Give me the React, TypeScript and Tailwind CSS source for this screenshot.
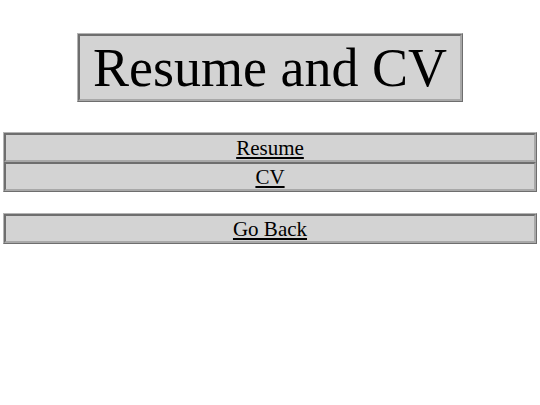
export default function App() {
  return (
    <div className="min-h-screen bg-white font-['Liberation_Serif',serif] text-black">
      {/* Title */}
      <div className="flex justify-center pt-[33px]">
        <div className="border border-t-[#b4b4b4] border-l-[#b4b4b4] border-b-[#6e6e6e] border-r-[#6e6e6e]">
          <div className="border-2 border-t-[#6e6e6e] border-l-[#6e6e6e] border-b-[#a8a8a8] border-r-[#a8a8a8] bg-[#d3d3d3] px-[13px]">
            <h1 className="text-[54px] leading-[62px] pt-[1px]">Resume and CV</h1>
          </div>
        </div>
      </div>

      {/* Links */}
      <div className="mx-[3px] mt-[30px] border border-t-[#b4b4b4] border-l-[#b4b4b4] border-b-[#6e6e6e] border-r-[#6e6e6e]">
        <LinkCell label="Resume" />
        <LinkCell label="CV" />
      </div>

      <div className="mx-[3px] mt-[21px] border border-t-[#b4b4b4] border-l-[#b4b4b4] border-b-[#6e6e6e] border-r-[#6e6e6e]">
        <LinkCell label="Go Back" />
      </div>
    </div>
  );
}

const LinkCell = ({ label }: { label: string }) => (
  <div className="border-2 border-t-[#6e6e6e] border-l-[#6e6e6e] border-b-[#a8a8a8] border-r-[#a8a8a8] bg-[#d3d3d3] text-center text-[21px] leading-[24px] pt-[1px]">
    <a href="#" className="underline">
      {label}
    </a>
  </div>
);
